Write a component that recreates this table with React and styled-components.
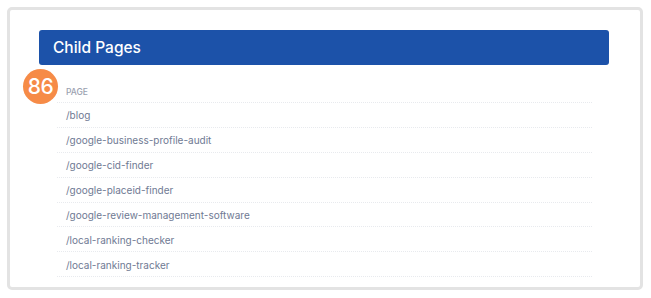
import styled, { createGlobalStyle } from "styled-components";

const GlobalStyle = createGlobalStyle`
    html, body {
        margin: 0;
        padding: 0;
        background: #ffffff;
    }
    body {
        font-family: Inter, "Noto Sans", sans-serif;
    }
`

const pages = [
    "/blog",
    "/google-business-profile-audit",
    "/google-cid-finder",
    "/google-placeid-finder",
    "/google-review-management-software",
    "/local-ranking-checker",
    "/local-ranking-tracker",
]

const App = () => {
    return (
        <>
            <GlobalStyle />
            <StPage>
                <StFrame>
                    <StHeader>Child Pages</StHeader>
                    <StList>
                        <StBadge>86</StBadge>
                        <StHeadRow>Page</StHeadRow>
                        {pages.map((p) => (
                            <StRow key={p}>{p}</StRow>
                        ))}
                    </StList>
                </StFrame>
            </StPage>
        </>
    );
}

const StPage = styled.div`
    width: 651px;
    height: 298px;
    box-sizing: border-box;
    padding: 7px 8px 8px 7px;
`

const StFrame = styled.div`
    height: 283px;
    box-sizing: border-box;
    border: 3px solid #e3e3e3;
    border-radius: 5px;
    padding: 20px 31px 0 29px;
    background: #fff;
`

const StHeader = styled.div`
    height: 35px;
    box-sizing: border-box;
    background: #1c52a9;
    border-radius: 3px;
    color: #fff;
    font-size: 15.5px;
    font-weight: 500;
    line-height: 35px;
    padding-left: 14px;
`

const StList = styled.div`
    position: relative;
    display: flex;
    flex-direction: column;
    margin: 13px 17px 0 18px;
`

const StBadge = styled.div`
    position: absolute;
    left: -34px;
    top: -9px;
    width: 35px;
    height: 35px;
    border-radius: 50%;
    background: #f68b47;
    color: #fff;
    font-size: 21px;
    font-weight: 500;
    line-height: 35px;
    text-align: center;
    letter-spacing: -0.5px;
`

const StHeadRow = styled.div`
    display: flex;
    align-items: center;
    height: 25px;
    box-sizing: border-box;
    padding: 3px 0 0 9px;
    font-size: 8.5px;
    font-weight: 500;
    text-transform: uppercase;
    color: #9ba1b0;
    border-bottom: 1px dotted #e8eaee;
`

const StRow = styled.div`
    display: flex;
    align-items: center;
    height: 24.9px;
    box-sizing: border-box;
    padding: 1px 0 0 9px;
    font-size: 10px;
    color: #6f7a93;
    border-bottom: 1px dotted #e8eaee;
`

export default App
